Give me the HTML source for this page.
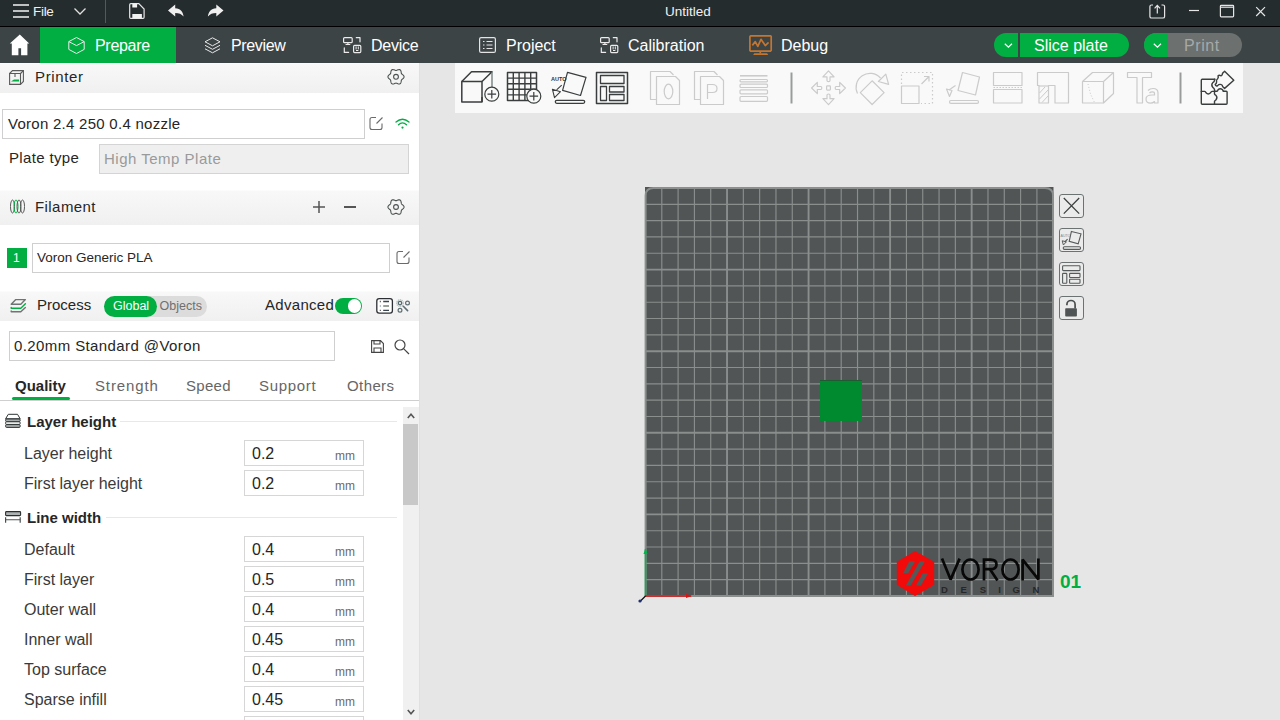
<!DOCTYPE html>
<html><head><meta charset="utf-8">
<style>
*{margin:0;padding:0;box-sizing:border-box}
html,body{width:1280px;height:720px;overflow:hidden;background:#e6e6e6;font-family:"Liberation Sans",sans-serif}
.a{position:absolute}
.t{position:absolute;white-space:nowrap;line-height:1}
svg{position:absolute;overflow:visible}
#title{left:0;top:0;width:1280px;height:26px;background:#252c2e}
#tline{left:0;top:26px;width:1280px;height:1px;background:#000}
#tabs{left:0;top:27px;width:1280px;height:36px;background:#3c4446}
#panel{left:0;top:63px;width:419px;height:657px;background:#fff}
.hdr{position:absolute;left:0;width:419px;background:linear-gradient(#fdfdfd 0px,#f8f8f8 1.5px,#f0f0f0 100%)}
.box{position:absolute;border:1px solid #cfcfcf;background:#fff}
.lbl{position:absolute;white-space:nowrap;line-height:1;font-size:15px;color:#262626}
.fld{position:absolute;left:244px;width:120px;height:26px;border:1px solid #d6d6d6;background:#fff}
.fld .v{position:absolute;left:7px;top:4.5px;font-size:16px;color:#262626;line-height:1}
.fld .u{position:absolute;left:90px;top:9px;font-size:12px;color:#6b6b6b;line-height:1}
.row{position:absolute;left:24px;font-size:16px;color:#3a3a3a;line-height:1;white-space:nowrap}
.sec{position:absolute;left:27px;font-size:15px;font-weight:bold;color:#262626;line-height:1;white-space:nowrap}
.secl{position:absolute;height:1px;background:#e8e8e8}
</style></head><body>
<div id="title" class="a"></div>
<div id="tline" class="a"></div>
<div id="tabs" class="a"></div>
<div id="panel" class="a"></div>

<!-- title bar content -->
<svg style="left:13px;top:4px" width="17" height="14"><g stroke="#e8e8e8" stroke-width="1.6"><line x1="0" y1="1" x2="16" y2="1"/><line x1="0" y1="7" x2="16" y2="7"/><line x1="0" y1="13" x2="16" y2="13"/></g></svg>
<div class="t" style="left:33px;top:5px;font-size:13.5px;color:#f0f0f0;letter-spacing:-0.3px">File</div>
<svg style="left:74px;top:8px" width="12" height="7"><polyline points="0.5,0.5 6,6 11.5,0.5" fill="none" stroke="#e0e0e0" stroke-width="1.3"/></svg>
<div class="a" style="left:105px;top:0;width:1px;height:23px;background:#545a5c"></div>
<svg style="left:0;top:0" width="240" height="26"><path d="M130.8 3.7 H138.8 L144.1 9 V17.2 Q144.1 18.3 143 18.3 H130.8 Q129.7 18.3 129.7 17.2 V4.8 Q129.7 3.7 130.8 3.7 Z" fill="none" stroke="#e8e8e8" stroke-width="1.2"/><rect x="132.3" y="3.7" width="4.8" height="3.8" fill="#f2f2f2"/><rect x="132.3" y="14" width="9.6" height="4.2" fill="#f2f2f2"/>
<path d="M168 10.6 L175.2 4.6 V8.2 C180.5 8.4 183.2 12 183.6 16.6 C181.5 13.8 179 12.9 175.2 12.9 V16.5 Z" fill="#f0f0f0"/>
<path d="M223.5 10.6 L216.3 4.6 V8.2 C211 8.4 208.3 12 207.9 16.6 C210 13.8 212.5 12.9 216.3 12.9 V16.5 Z" fill="#f0f0f0"/></svg>
<div class="t" style="left:665px;top:5px;font-size:13.5px;color:#f0f0f0">Untitled</div>
<svg style="left:0;top:0" width="1280" height="26">
<g fill="none" stroke="#e6e6e6" stroke-width="1.2">
<path d="M1153 5 H1151.5 Q1149.9 5 1149.9 6.6 V16.4 Q1149.9 18 1151.5 18 H1163 Q1164.6 18 1164.6 16.4 V6.6 Q1164.6 5 1163 5 H1161.5"/>
<path d="M1157.3 13.5 V5.6 M1154.6 8.3 L1157.3 5.4 L1160 8.3"/>
<path d="M1189 10.5 H1199"/>
<rect x="1220.4" y="5.4" width="13.2" height="11.4" rx="0.8"/>
<path d="M1220.4 7.2 H1233.6"/>
<path d="M1256.2 7.2 L1265 16 M1265 7.2 L1256.2 16"/>
</g>
</svg>

<!-- tabs -->
<svg style="left:0;top:26px" width="40" height="38"><path d="M19.8 8.6 L29.2 17.6 H27.4 V29.2 H21.1 V22.2 H18.4 V29.2 H11.8 V17.6 H9.8 Z" fill="#fff"/></svg>
<div class="a" style="left:40px;top:27px;width:136px;height:36px;background:#00ae42"></div>
<svg style="left:68px;top:37px" width="17" height="17" viewBox="0 0 17 17"><path d="M8.5 0.5L16.2 4.6V12.4L8.5 16.5L0.8 12.4V4.6Z M0.8 4.6L8.5 8.6L16.2 4.6" fill="none" stroke="#e4efe8" stroke-width="1"/></svg>
<div class="t" style="left:95px;top:38px;font-size:16px;color:#ffffff;letter-spacing:-0.3px">Prepare</div>
<svg style="left:204px;top:37px" width="17" height="17" viewBox="0 0 17 17"><g fill="none" stroke="#e8e8e8" stroke-width="1"><path d="M8.5 0.8L16 4.8L8.5 8.8L1 4.8Z"/><path d="M1 8.3L8.5 12.3L16 8.3"/><path d="M1 11.8L8.5 15.8L16 11.8"/></g></svg>
<div class="t" style="left:231px;top:38px;font-size:16px;color:#ffffff;letter-spacing:-0.35px">Preview</div>
<svg style="left:336px;top:30px" width="26" height="26" viewBox="0 0 26 26"><g fill="none" stroke="#ececec" stroke-width="1.2" stroke-linecap="round" stroke-linejoin="round">
<rect x="7.6" y="7.6" width="8.6" height="5.1" rx="1"/><path d="M11.9 12.8 V14.3 M10 14.5 H13.8"/>
<path d="M20.3 7.7 H24 V11.8"/>
<path d="M8.3 17.9 V22.4 H12.6"/>
<rect x="17.6" y="15.4" width="7.2" height="7.2" rx="1"/>
<path d="M20.1 16.8 V19 M22.3 16.8 V19 M20.4 20.5 H22" stroke-width="1"/>
</g></svg>
<div class="t" style="left:371px;top:38px;font-size:16px;color:#ffffff;letter-spacing:-0.25px">Device</div>
<svg style="left:479px;top:37px" width="17" height="16" viewBox="0 0 17 16"><g fill="none" stroke="#e4e4e4" stroke-width="1.2"><rect x="0.6" y="0.6" width="15.8" height="14.8" rx="1.5"/><path d="M4 4.5h1.5M7.5 4.5h6M4 8h1.5M7.5 8h6M4 11.5h1.5M7.5 11.5h6"/></g></svg>
<div class="t" style="left:506px;top:38px;font-size:16px;color:#ffffff">Project</div>
<svg style="left:593px;top:30px" width="26" height="26" viewBox="0 0 26 26"><g fill="none" stroke="#ececec" stroke-width="1.2" stroke-linecap="round" stroke-linejoin="round">
<rect x="7.6" y="7.6" width="8.6" height="5.1" rx="1"/><path d="M11.9 12.8 V14.3 M10 14.5 H13.8"/>
<path d="M20.3 7.7 H24 V11.8"/>
<path d="M8.3 17.9 V22.4 H12.6"/>
<rect x="17.6" y="15.4" width="7.2" height="7.2" rx="1"/>
<path d="M20.1 16.8 V19 M22.3 16.8 V19 M20.4 20.5 H22" stroke-width="1"/>
</g></svg>
<div class="t" style="left:628px;top:38px;font-size:16px;color:#ffffff">Calibration</div>
<svg style="left:0;top:0" width="800" height="60"><g fill="none" stroke="#c47530" stroke-width="1.7" stroke-linejoin="round">
<path d="M750.6 35.8 H770.6 L771.2 36.6 V50.4 L770.4 51.2 H750.6 L749.9 50.4 V36.6 Z"/>
<path d="M752.3 45.4 L755.3 41.6 L757.8 46.4 L761 39.3 L765.3 45.6 L768.6 42.4"/>
<path d="M760.3 51.6 V53.4"/>
</g><path d="M754.2 53.3 H767.2 L768.2 54.9 H753.2 Z" fill="#c47530"/></svg>
<div class="t" style="left:781px;top:38px;font-size:16px;color:#ffffff">Debug</div>
<!-- slice plate -->
<div class="a" style="left:994px;top:33px;width:135px;height:24px;border-radius:12px;background:#00ae42"></div>
<div class="a" style="left:1018px;top:33px;width:2px;height:24px;background:#3c4446"></div>
<svg style="left:1003.5px;top:42.5px" width="9" height="6"><polyline points="0.8,0.8 4.4,4.2 8,0.8" fill="none" stroke="#fff" stroke-width="1.2"/></svg>
<div class="t" style="left:1034px;top:38px;font-size:16px;color:#ffffff">Slice plate</div>
<div class="a" style="left:1144px;top:33px;width:98px;height:24px;border-radius:12px;background:#6c706f;overflow:hidden"><div class="a" style="left:0;top:0;width:24px;height:24px;background:#00ae42"></div></div>
<svg style="left:1153px;top:42.5px" width="9" height="6"><polyline points="0.8,0.8 4.4,4.2 8,0.8" fill="none" stroke="#fff" stroke-width="1.2"/></svg>
<div class="t" style="left:1184px;top:38px;font-size:16px;color:#a6a9a8;letter-spacing:0.6px">Print</div>

<!-- left panel -->
<div class="a" style="left:419px;top:63px;width:1px;height:657px;background:#e0e0e0"></div>
<div class="hdr" style="top:63px;height:30px"></div>
<svg style="left:9px;top:70px" width="16" height="15" viewBox="0 0 16 15"><g fill="none" stroke="#5a5a5a" stroke-width="1.1"><path d="M0.6 3.5H11.5V14.4H0.6Z"/><path d="M0.6 3.5L3.5 0.6H14.4V11.5L11.5 14.4"/><path d="M11.5 3.5L14.4 0.6"/><path d="M6 3.5V7"/></g><path d="M2 11.5L5 9.5H10V11.5Z" fill="#00ae42"/></svg>
<div class="lbl" style="left:35px;top:69px;font-size:15px;color:#262626;letter-spacing:0.65px">Printer</div>
<svg style="left:0;top:0" width="420" height="230"><path d="M404.05 76.80 L403.97 77.32 L403.73 77.82 L403.38 78.27 L402.95 78.66 L402.51 79.01 L402.10 79.33 L401.75 79.64 L401.50 79.97 L401.33 80.36 L401.24 80.82 L401.17 81.33 L401.09 81.89 L400.96 82.46 L400.75 82.99 L400.44 83.44 L400.02 83.77 L399.53 83.96 L398.99 84.01 L398.42 83.93 L397.86 83.75 L397.34 83.54 L396.86 83.34 L396.42 83.20 L396.00 83.15 L395.58 83.20 L395.14 83.34 L394.66 83.54 L394.14 83.75 L393.58 83.93 L393.01 84.01 L392.47 83.96 L391.98 83.77 L391.56 83.44 L391.25 82.99 L391.04 82.46 L390.91 81.89 L390.83 81.33 L390.76 80.82 L390.67 80.36 L390.50 79.97 L390.25 79.64 L389.90 79.33 L389.49 79.01 L389.05 78.66 L388.62 78.27 L388.27 77.82 L388.03 77.32 L387.95 76.80 L388.03 76.28 L388.27 75.78 L388.62 75.33 L389.05 74.94 L389.49 74.59 L389.90 74.27 L390.25 73.96 L390.50 73.62 L390.67 73.24 L390.76 72.78 L390.83 72.27 L390.91 71.71 L391.04 71.14 L391.25 70.61 L391.56 70.16 L391.98 69.83 L392.47 69.64 L393.01 69.59 L393.58 69.67 L394.14 69.85 L394.66 70.06 L395.14 70.26 L395.58 70.40 L396.00 70.45 L396.42 70.40 L396.86 70.26 L397.34 70.06 L397.86 69.85 L398.42 69.67 L398.99 69.59 L399.53 69.64 L400.02 69.83 L400.44 70.16 L400.75 70.61 L400.96 71.14 L401.09 71.71 L401.17 72.27 L401.24 72.78 L401.33 73.24 L401.50 73.62 L401.75 73.96 L402.10 74.27 L402.51 74.59 L402.95 74.94 L403.38 75.33 L403.73 75.78 L403.97 76.28Z" fill="none" stroke="#4c5252" stroke-width="1.1"/><circle cx="396" cy="76.8" r="2.4" fill="none" stroke="#4c5252" stroke-width="1.1"/></svg>
<div class="box" style="left:2px;top:109px;width:363px;height:30px"></div>
<div class="lbl" style="left:8px;top:116px;letter-spacing:0.27px">Voron 2.4 250 0.4 nozzle</div>
<svg style="left:369px;top:116px" width="15" height="15" viewBox="0 0 15 15"><path d="M7 1.5H3Q1 1.5 1 3.5V11.5Q1 13.5 3 13.5H11Q13 13.5 13 11.5V7.5" fill="none" stroke="#6a6a6a" stroke-width="1.1"/><path d="M7.5 7.5L13.5 1.5" stroke="#6a6a6a" stroke-width="1.1"/></svg>
<svg style="left:395px;top:118px" width="15" height="11" viewBox="0 0 15 11"><g fill="none" stroke="#00ae42" stroke-width="1.3" stroke-linecap="round"><path d="M1 4Q7.5 -1.5 14 4"/><path d="M3.5 6.8Q7.5 3 11.5 6.8"/></g><circle cx="7.5" cy="9.6" r="1.1" fill="#00ae42"/></svg>
<div class="lbl" style="left:9px;top:150px;font-size:15px;color:#262626;letter-spacing:0.35px">Plate type</div>
<div class="box" style="left:99px;top:144px;width:310px;height:30px;background:#efefef;border-color:#d4d4d4"></div>
<div class="lbl" style="left:104px;top:151px;color:#9a9a9a;letter-spacing:0.5px">High Temp Plate</div>

<div class="hdr" style="top:190px;height:35px"></div>
<svg style="left:10px;top:199px" width="15" height="15" viewBox="0 0 15 15"><g fill="none" stroke-width="1"><ellipse cx="2.5" cy="7.5" rx="2" ry="6.5" stroke="#5a5a5a"/><ellipse cx="6" cy="7.5" rx="2" ry="6.5" stroke="#00ae42"/><ellipse cx="9" cy="7.5" rx="2" ry="6.5" stroke="#5a5a5a"/><ellipse cx="12.5" cy="7.5" rx="2" ry="6.5" stroke="#5a5a5a"/></g></svg>
<div class="lbl" style="left:35px;top:199px;color:#262626;letter-spacing:0.43px">Filament</div>
<svg style="left:313px;top:201px" width="12" height="12"><g stroke="#555" stroke-width="1.5"><line x1="0" y1="6" x2="12" y2="6"/><line x1="6" y1="0" x2="6" y2="12"/></g></svg>
<div class="a" style="left:344px;top:206px;width:12px;height:1.7px;background:#555"></div>
<svg style="left:0;top:0" width="420" height="230"><path d="M404.05 207.00 L403.97 207.52 L403.73 208.02 L403.38 208.47 L402.95 208.86 L402.51 209.21 L402.10 209.53 L401.75 209.84 L401.50 210.18 L401.33 210.56 L401.24 211.02 L401.17 211.53 L401.09 212.09 L400.96 212.66 L400.75 213.19 L400.44 213.64 L400.02 213.97 L399.53 214.16 L398.99 214.21 L398.42 214.13 L397.86 213.95 L397.34 213.74 L396.86 213.54 L396.42 213.40 L396.00 213.35 L395.58 213.40 L395.14 213.54 L394.66 213.74 L394.14 213.95 L393.58 214.13 L393.01 214.21 L392.47 214.16 L391.98 213.97 L391.56 213.64 L391.25 213.19 L391.04 212.66 L390.91 212.09 L390.83 211.53 L390.76 211.02 L390.67 210.56 L390.50 210.18 L390.25 209.84 L389.90 209.53 L389.49 209.21 L389.05 208.86 L388.62 208.47 L388.27 208.02 L388.03 207.52 L387.95 207.00 L388.03 206.48 L388.27 205.98 L388.62 205.53 L389.05 205.14 L389.49 204.79 L389.90 204.47 L390.25 204.16 L390.50 203.82 L390.67 203.44 L390.76 202.98 L390.83 202.47 L390.91 201.91 L391.04 201.34 L391.25 200.81 L391.56 200.36 L391.98 200.03 L392.47 199.84 L393.01 199.79 L393.58 199.87 L394.14 200.05 L394.66 200.26 L395.14 200.46 L395.58 200.60 L396.00 200.65 L396.42 200.60 L396.86 200.46 L397.34 200.26 L397.86 200.05 L398.42 199.87 L398.99 199.79 L399.53 199.84 L400.02 200.03 L400.44 200.36 L400.75 200.81 L400.96 201.34 L401.09 201.91 L401.17 202.47 L401.24 202.98 L401.33 203.44 L401.50 203.82 L401.75 204.16 L402.10 204.47 L402.51 204.79 L402.95 205.14 L403.38 205.53 L403.73 205.98 L403.97 206.48Z" fill="none" stroke="#4c5252" stroke-width="1.1"/><circle cx="396" cy="207" r="2.4" fill="none" stroke="#4c5252" stroke-width="1.1"/></svg>
<div class="a" style="left:7px;top:248px;width:20px;height:20px;background:#00ae42"></div>
<div class="t" style="left:13px;top:252px;font-size:12px;color:#fff">1</div>
<div class="box" style="left:32px;top:243px;width:358px;height:30px"></div>
<div class="lbl" style="left:37px;top:251px;font-size:13.5px">Voron Generic PLA</div>
<svg style="left:396px;top:250px" width="15" height="15" viewBox="0 0 15 15"><path d="M7 1.5H3Q1 1.5 1 3.5V11.5Q1 13.5 3 13.5H11Q13 13.5 13 11.5V7.5" fill="none" stroke="#6a6a6a" stroke-width="1.1"/><path d="M7.5 7.5L13.5 1.5" stroke="#6a6a6a" stroke-width="1.1"/></svg>

<div class="hdr" style="top:291px;height:30px"></div>
<svg style="left:0;top:0" width="30" height="320"><g fill="none" stroke-width="1.4" stroke-linejoin="round" stroke-linecap="round">
<path d="M15.8 299.6 H25.4 L20.8 304.2 H11.2 Z" stroke="#6f7373"/>
<path d="M11.2 307.4 V308.3 H20.8 L25.4 303.8" stroke="#00ae42"/>
<path d="M11.2 311 V311.8 H20.8 L25.4 307.6" stroke="#6f7373"/>
</g></svg>
<div class="lbl" style="left:37px;top:296.5px;color:#262626">Process</div>
<div class="a" style="left:103.5px;top:295.5px;width:103.5px;height:21.5px;border-radius:11px;background:#dcdcdc"></div>
<div class="a" style="left:104px;top:296px;width:53px;height:21px;border-radius:11px;background:#00ae42"></div>
<div class="t" style="left:113px;top:299.7px;font-size:12.5px;color:#fff">Global</div>
<div class="t" style="left:159.5px;top:299.7px;font-size:12.5px;color:#6f6f6f">Objects</div>
<div class="lbl" style="left:265px;top:297px;color:#262626;letter-spacing:0.3px">Advanced</div>
<div class="a" style="left:335px;top:298px;width:27px;height:16px;border-radius:8px;background:#00ae42"></div>
<div class="a" style="left:348px;top:299px;width:13px;height:14px;border-radius:7px;background:#fff"></div>
<svg style="left:0;top:0" width="420" height="330">
<rect x="376.8" y="298.6" width="15.6" height="14.6" rx="2.4" fill="#fff" stroke="#2c2f33" stroke-width="1.3"/>
<g stroke-width="1.3"><path d="M379.8 301.5 H380.8 M379.8 310.3 H380.8" stroke="#444"/><path d="M379.8 306 H380.8" stroke="#7d9aa6"/>
<path d="M383.2 301.5 H389 M383.2 310.3 H389" stroke="#3a4450"/><path d="M383.2 306 H389" stroke="#778577" stroke-width="1.5"/></g>
</svg>
<svg style="left:0;top:0" width="420" height="330">
<circle cx="400" cy="303.1" r="3.2" fill="none" stroke="#b9c4c2" stroke-width="1.6" stroke-dasharray="1.2 0.6"/>
<circle cx="400" cy="303.1" r="1.7" fill="none" stroke="#55686e" stroke-width="1.2"/>
<circle cx="407.5" cy="303" r="1.9" fill="none" stroke="#5d6e72" stroke-width="1.2"/>
<circle cx="400" cy="310.3" r="1.9" fill="none" stroke="#5d6e72" stroke-width="1.2"/>
<path d="M403.3 306.3 L407.6 310.6" stroke="#5d6e72" stroke-width="1.6" stroke-linecap="round"/>
</svg>
<div class="box" style="left:9px;top:331px;width:326px;height:30px"></div>
<div class="lbl" style="left:14px;top:338px;letter-spacing:0.4px">0.20mm Standard @Voron</div>
<svg style="left:371px;top:340px" width="13" height="13" viewBox="0 0 13 13"><path d="M0.6 0.6H9.5L12.4 3.5V12.4H0.6Z M3 0.6V4H9V0.6 M3 12.4V8H10V12.4" fill="none" stroke="#444" stroke-width="1.1"/></svg>
<svg style="left:394px;top:339px" width="16" height="16" viewBox="0 0 16 16"><g fill="none" stroke="#444" stroke-width="1.2"><circle cx="6" cy="6" r="5"/><path d="M9.8 9.8L15 15"/></g></svg>
<div class="lbl" style="left:15px;top:378px;font-weight:bold;color:#262626">Quality</div>
<div class="lbl" style="left:95px;top:378px;color:#666;letter-spacing:0.87px">Strength</div>
<div class="lbl" style="left:186px;top:378px;color:#666;letter-spacing:0.3px">Speed</div>
<div class="lbl" style="left:259px;top:378px;color:#666;letter-spacing:0.7px">Support</div>
<div class="lbl" style="left:347px;top:378px;color:#666;letter-spacing:0.4px">Others</div>
<div class="a" style="left:12px;top:397px;width:58px;height:3px;border-radius:1.5px;background:#00ae42"></div>
<div class="a" style="left:0;top:400px;width:419px;height:1px;background:#cfcfcf"></div>
<!-- settings -->
<div class="sec" style="top:413.5px">Layer height</div>
<div class="secl" style="left:120px;top:421px;width:277px"></div>
<svg style="left:0;top:0" width="30" height="440"><g fill="none" stroke="#2e3434" stroke-width="1">
<path d="M5.6 418.8 L8.3 414.3 H17.5 L20.2 418.8 Z" fill="#fff"/>
<rect x="5.6" y="419" width="14.6" height="2.6" rx="1" fill="#a9adad"/>
<rect x="5.6" y="421.8" width="14.6" height="2.6" rx="1" fill="#fff"/>
<rect x="5.6" y="424.6" width="14.6" height="2.8" rx="1" fill="#a9adad"/>
</g></svg><div class="row" style="top:446px">Layer height</div>
<div class="fld" style="top:440px"><div class="v">0.2</div><div class="u">mm</div></div>
<div class="row" style="top:476px">First layer height</div>
<div class="fld" style="top:470px"><div class="v">0.2</div><div class="u">mm</div></div>
<div class="sec" style="top:509.5px">Line width</div>
<div class="secl" style="left:106px;top:517px;width:291px"></div>
<svg style="left:0;top:0" width="30" height="540">
<rect x="5.6" y="511.6" width="15" height="4" rx="0.8" fill="#aeb2b2" stroke="#2a3030" stroke-width="1.1"/>
<path d="M5.7 519.7 H20.3" stroke="#6c7272" stroke-width="1.2"/>
<path d="M5.6 517.3 V522.7 M20.2 517.3 V522.7" stroke="#4a5050" stroke-width="1.2"/>
</svg><div class="row" style="top:542px">Default</div>
<div class="fld" style="top:536px"><div class="v">0.4</div><div class="u">mm</div></div>
<div class="row" style="top:572px">First layer</div>
<div class="fld" style="top:566px"><div class="v">0.5</div><div class="u">mm</div></div>
<div class="row" style="top:602px">Outer wall</div>
<div class="fld" style="top:596px"><div class="v">0.4</div><div class="u">mm</div></div>
<div class="row" style="top:632px">Inner wall</div>
<div class="fld" style="top:626px"><div class="v">0.45</div><div class="u">mm</div></div>
<div class="row" style="top:662px">Top surface</div>
<div class="fld" style="top:656px"><div class="v">0.4</div><div class="u">mm</div></div>
<div class="row" style="top:692px">Sparse infill</div>
<div class="fld" style="top:686px"><div class="v">0.45</div><div class="u">mm</div></div>
<div class="row" style="top:722px"></div>
<div class="fld" style="top:716px"><div class="v">0.4</div><div class="u">mm</div></div>
<div class="a" style="left:403px;top:407px;width:16px;height:313px;background:#f0f0f0"></div>
<div class="a" style="left:403px;top:424px;width:15px;height:81px;background:#c8c8c8"></div>
<svg style="left:407px;top:413px" width="8" height="6"><polyline points="0.8,5 4,1.2 7.2,5" fill="none" stroke="#555" stroke-width="1.6"/></svg>
<svg style="left:407px;top:709px" width="8" height="6"><polyline points="0.8,1 4,4.8 7.2,1" fill="none" stroke="#555" stroke-width="1.6"/></svg>

<!-- canvas -->
<svg style="left:0;top:0" width="1280" height="720">
<rect x="645" y="187" width="408.5" height="409.5" fill="#515556"/>
<path d="M645.6 596.0 V195.5 Q645.6 188 653.6 188 H1045.0 Q1053 188 1053 195.5 V596.0 Z" fill="none" stroke="#8b8f8e" stroke-width="2"/>
<g stroke="#8a8e8d"><line x1="661.80" y1="187.98" x2="661.80" y2="595.98" stroke-width="1.15"/><line x1="645.49" y1="204.30" x2="1053.22" y2="204.30" stroke-width="1.15"/><line x1="678.11" y1="187.98" x2="678.11" y2="595.98" stroke-width="1.15"/><line x1="645.49" y1="220.62" x2="1053.22" y2="220.62" stroke-width="1.15"/><line x1="694.42" y1="187.98" x2="694.42" y2="595.98" stroke-width="1.15"/><line x1="645.49" y1="236.94" x2="1053.22" y2="236.94" stroke-width="1.15"/><line x1="710.73" y1="187.98" x2="710.73" y2="595.98" stroke-width="1.15"/><line x1="645.49" y1="253.26" x2="1053.22" y2="253.26" stroke-width="1.15"/><line x1="727.03" y1="187.98" x2="727.03" y2="595.98" stroke-width="1.9"/><line x1="645.49" y1="269.58" x2="1053.22" y2="269.58" stroke-width="1.9"/><line x1="743.34" y1="187.98" x2="743.34" y2="595.98" stroke-width="1.15"/><line x1="645.49" y1="285.90" x2="1053.22" y2="285.90" stroke-width="1.15"/><line x1="759.65" y1="187.98" x2="759.65" y2="595.98" stroke-width="1.15"/><line x1="645.49" y1="302.22" x2="1053.22" y2="302.22" stroke-width="1.15"/><line x1="775.96" y1="187.98" x2="775.96" y2="595.98" stroke-width="1.15"/><line x1="645.49" y1="318.54" x2="1053.22" y2="318.54" stroke-width="1.15"/><line x1="792.27" y1="187.98" x2="792.27" y2="595.98" stroke-width="1.15"/><line x1="645.49" y1="334.86" x2="1053.22" y2="334.86" stroke-width="1.15"/><line x1="808.58" y1="187.98" x2="808.58" y2="595.98" stroke-width="1.9"/><line x1="645.49" y1="351.18" x2="1053.22" y2="351.18" stroke-width="1.9"/><line x1="824.89" y1="187.98" x2="824.89" y2="595.98" stroke-width="1.15"/><line x1="645.49" y1="367.50" x2="1053.22" y2="367.50" stroke-width="1.15"/><line x1="841.20" y1="187.98" x2="841.20" y2="595.98" stroke-width="1.15"/><line x1="645.49" y1="383.82" x2="1053.22" y2="383.82" stroke-width="1.15"/><line x1="857.51" y1="187.98" x2="857.51" y2="595.98" stroke-width="1.15"/><line x1="645.49" y1="400.14" x2="1053.22" y2="400.14" stroke-width="1.15"/><line x1="873.82" y1="187.98" x2="873.82" y2="595.98" stroke-width="1.15"/><line x1="645.49" y1="416.46" x2="1053.22" y2="416.46" stroke-width="1.15"/><line x1="890.12" y1="187.98" x2="890.12" y2="595.98" stroke-width="1.9"/><line x1="645.49" y1="432.78" x2="1053.22" y2="432.78" stroke-width="1.9"/><line x1="906.43" y1="187.98" x2="906.43" y2="595.98" stroke-width="1.15"/><line x1="645.49" y1="449.10" x2="1053.22" y2="449.10" stroke-width="1.15"/><line x1="922.74" y1="187.98" x2="922.74" y2="595.98" stroke-width="1.15"/><line x1="645.49" y1="465.42" x2="1053.22" y2="465.42" stroke-width="1.15"/><line x1="939.05" y1="187.98" x2="939.05" y2="595.98" stroke-width="1.15"/><line x1="645.49" y1="481.74" x2="1053.22" y2="481.74" stroke-width="1.15"/><line x1="955.36" y1="187.98" x2="955.36" y2="595.98" stroke-width="1.15"/><line x1="645.49" y1="498.06" x2="1053.22" y2="498.06" stroke-width="1.15"/><line x1="971.67" y1="187.98" x2="971.67" y2="595.98" stroke-width="1.9"/><line x1="645.49" y1="514.38" x2="1053.22" y2="514.38" stroke-width="1.9"/><line x1="987.98" y1="187.98" x2="987.98" y2="595.98" stroke-width="1.15"/><line x1="645.49" y1="530.70" x2="1053.22" y2="530.70" stroke-width="1.15"/><line x1="1004.29" y1="187.98" x2="1004.29" y2="595.98" stroke-width="1.15"/><line x1="645.49" y1="547.02" x2="1053.22" y2="547.02" stroke-width="1.15"/><line x1="1020.60" y1="187.98" x2="1020.60" y2="595.98" stroke-width="1.15"/><line x1="645.49" y1="563.34" x2="1053.22" y2="563.34" stroke-width="1.15"/><line x1="1036.91" y1="187.98" x2="1036.91" y2="595.98" stroke-width="1.15"/><line x1="645.49" y1="579.66" x2="1053.22" y2="579.66" stroke-width="1.15"/></g>
<rect x="820" y="380" width="42" height="41" fill="#008a30"/>
<line x1="820" y1="380.5" x2="862" y2="380.5" stroke="#1f5a33" stroke-width="1"/>
<line x1="645.5" y1="596" x2="645.5" y2="549" stroke="#00b84a" stroke-width="1.5"/>
<path d="M643.5 554 L645.5 548 L647.5 554 Z" fill="#00b84a"/>
<line x1="645" y1="596" x2="691" y2="596" stroke="#e01010" stroke-width="1.5"/>
<path d="M686 594 L692 596 L686 598 Z" fill="#e01010"/>
<line x1="645.5" y1="596" x2="640.5" y2="601" stroke="#111" stroke-width="1.3"/>
<circle cx="640" cy="601" r="1.6" fill="#203070"/>
</svg>

<!-- toolbar -->
<div class="a" style="left:455px;top:63px;width:788px;height:50px;background:#f9f9f9"></div>
<svg style="left:0;top:0" width="1280" height="720">
<g fill="none" stroke="#3a3e3e" stroke-width="1.6" stroke-linejoin="round">
 <!-- cube plus -->
 <path d="M461.8 81.5 H482 V102 H461.8 Z" stroke-width="1.5"/>
 <path d="M461.8 81.5 L471.5 71.8 H492 L482 81.5" stroke-width="1.5"/>
 <path d="M492 71.8 V87.5" stroke="#6a7676" stroke-width="1.3"/>
 <path d="M482 97 V102" stroke-width="1.5"/>
 <circle cx="491.8" cy="94.2" r="7" fill="#f9f9f9" stroke-width="1.2"/>
 <path d="M487.5 94.2 H496.1 M491.8 89.9 V98.5" stroke-width="1.2"/>
 <!-- grid plus -->
 <path d="M507.5 72.5 H536.5 V100.5 H507.5 Z" stroke-width="1.5"/>
 <path d="M513.3 72.5 V100.5 M519.1 72.5 V100.5 M524.9 72.5 V100.5 M530.7 72.5 V100.5 M507.5 78.1 H536.5 M507.5 83.7 H536.5 M507.5 89.3 H536.5 M507.5 94.9 H536.5" stroke-width="1.4"/>
 <circle cx="533.8" cy="96.2" r="7" fill="#f9f9f9" stroke-width="1.2"/>
 <path d="M529.5 96.2 H538.1 M533.8 91.9 V100.5" stroke-width="1.2"/>
 <!-- auto orient -->
 <path d="M567.5 72.3 L586 77.3 L580.5 95.5 L562.6 90.3 Z" stroke-width="1.2"/>
 <path d="M561.7 85.1 L556.6 89.9" stroke-width="1.1"/>
 <path d="M552.4 89.2 L560.5 91.7 L554.5 97.6 Z" stroke-width="1.1"/>
 <rect x="555.3" y="100.3" width="29.4" height="3" rx="1.5" stroke-width="1.3"/>
 <!-- arrange -->
 <rect x="596.5" y="72.5" width="31" height="31" stroke-width="1.5"/>
 <rect x="600.5" y="75.5" width="23.5" height="8" stroke-width="1.3"/>
 <rect x="600.5" y="86.5" width="6" height="14" stroke-width="1.3"/>
 <rect x="609.5" y="86.5" width="14.5" height="5.5" stroke-width="1.3"/>
 <rect x="609.5" y="94.5" width="14.5" height="6" stroke-width="1.3"/>
 <!-- separators -->
 <path d="M791.5 72.5 V103.5" stroke="#9a9c9c" stroke-width="2"/>
 <path d="M1180.5 72.5 V103.5" stroke="#9a9c9c" stroke-width="2"/>
</g>
<g fill="none" stroke="#cbcbcb" stroke-width="1.2" stroke-linejoin="round">
 <!-- copy 0 -->
 <path d="M656 99.5 H650.5 V71.5 H670 L673.5 75"/>
 <path d="M656.5 76.5 H675.5 L679.5 80.5 V104.5 H656.5 Z"/>
 <ellipse cx="668.5" cy="91.5" rx="4.3" ry="7.3"/>
 <!-- copy P -->
 <path d="M700 99.5 H694.5 V71.5 H714 L717.5 75"/>
 <path d="M700.5 76.5 H719.5 L723.5 80.5 V104.5 H700.5 Z"/>
 <path d="M707.5 99 V84.5 H712.5 Q717 84.5 717 88.5 Q717 92.5 712.5 92.5 H707.5"/>
 <!-- lines -->
 <path d="M740 75.8 H767.5" stroke-width="1.6"/>
 <rect x="740" y="79.5" width="27.5" height="2.3" rx="1"/>
 <rect x="740" y="84.2" width="27.5" height="3.3" rx="1"/>
 <rect x="740" y="89.8" width="27.5" height="4" rx="1"/>
 <rect x="740" y="96.5" width="27.5" height="4.8" rx="1"/>
 <!-- move -->
 <path d="M828.5 70.9 L834.1 76.9 H830 V80.5 Q830 81.6 828.5 81.6 Q827 81.6 827 80.5 V76.9 H822.9 Z"/>
 <path d="M828.5 104.7 L834.1 98.7 H830 V95.1 Q830 94 828.5 94 Q827 94 827 95.1 V98.7 H822.9 Z"/>
 <path d="M811.6 88 L817.3 82.3 V86.5 H820.8 Q821.8 86.5 821.8 88 Q821.8 89.5 820.8 89.5 H817.3 V93.7 Z"/>
 <path d="M845.4 88 L839.7 82.3 V86.5 H836.2 Q835.2 86.5 835.2 88 Q835.2 89.5 836.2 89.5 H839.7 V93.7 Z"/>
 <rect x="826.6" y="85.9" width="3.8" height="4.2" rx="0.8"/>
 <!-- rotate -->
 <path d="M872.1 80.8 L884.1 92.6 L872.1 104.5 L860.3 92.6 Z"/>
 <path d="M857.5 93.5 A14 14 0 0 1 880.5 78"/>
 <path d="M878.4 81.5 L885.8 74.1 L888.6 84.4 Z"/>
 <!-- scale -->
 <rect x="901.5" y="86" width="17.5" height="17.5"/>
 <path d="M901.5 84 V72.5 H932.5 V103.5 H921" stroke-dasharray="1.5 2.5"/>
 <path d="M921.5 84 L928.5 77 M924 76.5 H929 V81.5"/>
 <!-- lay on face -->
 <path d="M962.5 72.5 L979.5 77 L975.5 95 L958 90.5 Z"/>
 <path d="M955.5 85.5 L949 90"/>
 <path d="M946.5 89 L952 90.5 L949.5 96.5 Z"/>
 <rect x="949.5" y="100.5" width="29" height="2.8" rx="1.4"/>
 <!-- cut -->
 <rect x="993.5" y="72.5" width="28.5" height="13"/>
 <rect x="993.5" y="89.5" width="28.5" height="13.5"/>
 <path d="M993.5 87.5 H1022" stroke-dasharray="1.5 1.5" stroke-width="1"/>
 <!-- support paint -->
 <path d="M1037.5 72.5 H1068.5 V103 H1055 V85.5 H1048.5 V103 H1039 V85.5 H1037.5 Z"/>
 <path d="M1039 86 H1048.5" />
 <path d="M1039.5 93 L1045 87 M1039.5 99 L1048 90 M1042 102.5 L1048 96" stroke-width="1"/>
 <!-- seam cube -->
 <path d="M1082.5 81.5 H1103.5 V103 H1082.5 Z"/>
 <path d="M1082.5 81.5 L1092.5 72.5 H1113.5 L1103.5 81.5 M1113.5 72.5 V93.5 L1103.5 103"/>
 <path d="M1088 84 L1090.5 94 L1094.5 102.5" stroke-dasharray="1 2" stroke-width="1"/>
 <!-- text Ta -->
 <path d="M1127.5 72.5 H1151.5 V77.5 H1142.5 V103 H1137 V77.5 H1127.5 Z"/>
 <path d="M1148 90.5 Q1150 88.5 1153 88.5 Q1158 88.5 1158 93 V103 H1154.5 V101.5 Q1153 103.2 1150.5 103.2 Q1146 103.2 1146 99 Q1146 95 1152 95 H1154.5 V93.5 Q1154.5 91.8 1152.5 91.8 Q1150.5 91.8 1149.5 93"/>
</g>
<!-- puzzle -->
<g fill="none" stroke="#3a3e3e" stroke-width="1.4" stroke-linejoin="round" stroke-linecap="round">
 <path d="M1215 79.2 H1202.2 Q1201.3 79.2 1201.3 80.2 V103.3 Q1201.3 104.2 1202.2 104.2 H1226.2 Q1227.1 104.2 1227.1 103.3 V92 Q1227.1 91.2 1226.2 91.2 H1223.3"/>
 <path d="M1201.3 91.4 H1204.6 Q1205.5 91.6 1206 92.8 Q1208.2 95 1210.6 92.8 Q1211.2 91.6 1212.2 91.4 H1214.5"/>
 <path d="M1214.5 79.2 V80.5 Q1214.2 81.8 1212.8 82.6 Q1210.8 84.8 1212.8 87.4 Q1214.2 88.4 1214.5 89.5 V94 Q1214.8 94.8 1216 95.4 Q1217.8 97.4 1216 99.8 Q1214.8 100.5 1214.5 101.5 V104.2"/>
 <path d="M1214.5 91.2 H1217 Q1217.8 91 1218 89.8 Q1220.2 87.6 1222.6 89.8 Q1223 91 1223.5 91.2"/>
 <path d="M1224.6 71.2 L1233.8 80.3 L1224.6 88.4 L1222.6 86.4 Q1222.6 85 1221.4 84.6 Q1219.2 83.8 1217.6 85.6 Q1216.6 86.4 1215.8 85.6 L1215.2 84.4 Q1216.6 83.6 1216.6 82 Q1216 80 1217.6 78.8 Q1218.8 77.4 1218 76 Q1219 74.6 1220.6 75.6 Q1221.6 76 1222.2 74.8 Q1222.2 73.4 1223.4 72.4 Z"/>
</g>
</svg>
<div class="t" style="left:551px;top:77px;font-size:5.5px;font-weight:bold;color:#333">AUTO</div>
<!-- side buttons -->
<div class="a" style="left:1059px;top:194px;width:25px;height:24px;border:1.3px solid #6c7272;border-radius:3px;background:#ebebeb"></div>
<div class="a" style="left:1059px;top:228px;width:25px;height:24px;border:1.3px solid #6c7272;border-radius:3px;background:#ebebeb"></div>
<div class="a" style="left:1059px;top:262px;width:25px;height:24px;border:1.3px solid #6c7272;border-radius:3px;background:#ebebeb"></div>
<div class="a" style="left:1059px;top:296px;width:25px;height:24px;border:1.3px solid #6c7272;border-radius:3px;background:#ebebeb"></div>
<svg style="left:0;top:0" width="1280" height="720">
 <path d="M1063.8 198 L1079.2 213.6 M1079.2 198 L1063.8 213.6" stroke="#3c4040" stroke-width="1.3"/>
 <g fill="none" stroke="#555a5a" stroke-width="1.1">
  <path d="M1071.4 231.5 L1081 233.8 L1078.2 243.8 L1069.2 241.3 Z"/>
  <path d="M1067.6 239.2 L1064.6 242"/>
  <path d="M1062.2 240.8 L1066.4 241.8 L1063.4 245 Z" stroke-width="1"/>
  <rect x="1063.2" y="246.8" width="17.4" height="2.6" rx="1.3" stroke-width="1.1"/>
  <rect x="1062.6" y="265.8" width="17.4" height="4.8" rx="0.8"/>
  <rect x="1062.6" y="273.4" width="4.2" height="9.9" rx="0.6"/>
  <rect x="1069.6" y="273.4" width="10.4" height="4.1" rx="0.6"/>
  <rect x="1069.6" y="279.2" width="10.4" height="4.1" rx="0.6"/>
 </g>
 <text x="1060.5" y="237" font-family="Liberation Sans" font-size="3.6" fill="#7a8a8a">AUTO</text>
 <path d="M1075.1 308.6 V304.6 A4.1 4.1 0 0 0 1066.9 304.6 V305.2" fill="none" stroke="#4a4e4e" stroke-width="1.7"/>
 <rect x="1065.2" y="308.2" width="11.7" height="8.3" rx="0.8" fill="#505454"/>
</svg>
<!-- voron logo -->
<svg style="left:0;top:0" width="1280" height="720">
 <path d="M915 551 L934.2 561.7 V584.8 L915 596 L896.8 584.8 V561.7 Z" fill="#f20a0a"/>
 <g fill="#545859">
 <path d="M909.2 561.4 H915 L908.2 573.3 H903 Z"/>
 <path d="M919.6 561.4 H924.8 L910.7 585.5 H905.9 Z"/>
 <path d="M922.6 573.6 H928 L920.8 585.5 H916 Z"/>
 </g>
 <g fill="none" stroke="#080808" stroke-width="2.7" stroke-miterlimit="1.5">
  <path d="M942 558.6 L950.6 579.6 L959.6 558.6"/>
  <ellipse cx="970.5" cy="569.5" rx="8.1" ry="10"/>
  <path d="M984 580.5 V559.6 H990.5 Q996.5 559.6 996.5 564.4 Q996.5 569.2 990.5 569.2 H984 M990 569.2 L997.5 580.5"/>
  <ellipse cx="1010.5" cy="569.5" rx="8.1" ry="10"/>
  <path d="M1022.6 580.5 V559.6 L1038.4 579.4 V558.6"/>
 </g>
 <g fill="#262828" font-family="Liberation Sans" font-size="9.5px" font-weight="bold">
  <text x="941" y="592.5">D</text><text x="960.5" y="592.5">E</text><text x="979.8" y="592.5">S</text><text x="998.2" y="592.5">I</text><text x="1012.5" y="592.5">G</text><text x="1032.5" y="592.5">N</text>
 </g>
</svg>
<div class="t" style="left:1060px;top:572px;font-size:19px;font-weight:bold;color:#00ae42">01</div>
</body></html>
